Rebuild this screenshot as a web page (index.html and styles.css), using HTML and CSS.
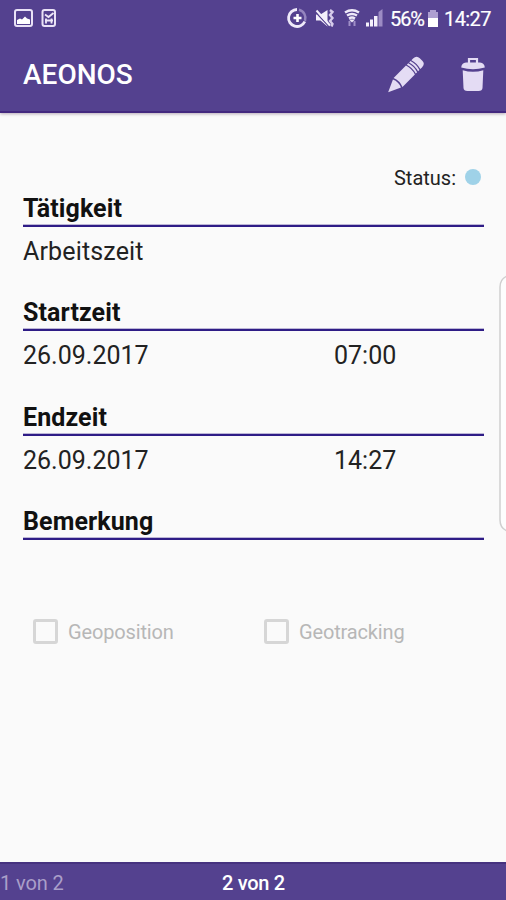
FILE: index.html
```html
<!DOCTYPE html>
<html lang="de">
<head>
<meta charset="utf-8">
<title>AEONOS</title>
<link rel="stylesheet" href="styles.css">
</head>
<body>
<div class="screen">
  <header class="top">
    <div class="statusbar">
      <svg class="notices" width="60" height="36" viewBox="0 0 60 36">
        <rect x="15" y="10" width="17" height="16" rx="2" fill="none" stroke="#e9e2f6" stroke-width="2"/>
        <path d="M17 20l3-1.500 2 1 3-3 2 2 3 1v4.500H17z" fill="#fff"/>
        <rect x="42.500" y="10" width="12.500" height="16" rx="2" fill="none" stroke="#e9e2f6" stroke-width="2"/>
        <path d="M45 14.500l3.500 2.500 5-4M46 18.500v5M51.500 18.500v5M45 20.500h8" fill="none" stroke="#eee8f8" stroke-width="1.800"/>
      </svg>
      <svg class="signals" width="104" height="36" viewBox="284 0 104 36">
        <path d="M297 9.500a8.500 8.500 0 1 0 7.800 12" fill="none" stroke="#efeafa" stroke-width="2.800"/>
        <path d="M299 9.800a8.500 8.500 0 0 1 6 11" fill="none" stroke="#9585bf" stroke-width="2.500"/>
        <path d="M297.500 14v8M293.500 18h8" stroke="#fff" stroke-width="2.600"/>
        <path d="M316 14.500h4.500l7-4.500v16.500l-7-6H316z" fill="#f4f0fb"/>
        <path d="M315.500 12l13 14" stroke="#54418f" stroke-width="1.300"/>
        <path d="M316.500 10.500l13.500 15" stroke="#f4f0fb" stroke-width="2"/>
        <path d="M330 10l2.500 2-2.500 3 2.500 3-2.500 3 2.500 3-1 2.500" fill="none" stroke="#d5cbea" stroke-width="2.400"/>
        <path d="M345 12.500q7-4.500 14 0M347 15.500q5-3 10 0M349 18.500q3-2 6 0" fill="none" stroke="#eee9f8" stroke-width="2.400"/>
        <path d="M349 19.500h6l-3 3z" fill="#eee9f8"/>
        <path d="M349.500 21v5M354.500 21v5" stroke="#9f8fc7" stroke-width="2"/>
        <path d="M366 26.500v-4h3v4zM370 26.500v-7h3v7zM374 26.500v-10.500h3.500v10.500z" fill="#f4f0fb"/>
        <path d="M378.500 26.500V12l4-3v17.500z" fill="#9c8bc4"/>
      </svg>
      <span class="percent">56%</span>
      <svg class="battery" width="12" height="20" viewBox="0 0 12 20">
        <path d="M1 9V3h2V1h6v2h2v6z" fill="#ae9fd1"/>
        <path d="M1 9h10v9H1z" fill="#fff"/>
      </svg>
      <span class="clock">14:27</span>
    </div>
    <div class="appbar">
      <h1 class="title">AEONOS</h1>
      <svg class="pencil" width="38" height="38" viewBox="0 0 38 38">
        <g transform="translate(1.500 36) rotate(-45)" fill="#e4dcf4">
          <path d="M-.5 0L12-5.700Q14.500 0 12 5.700z"/>
          <path d="M13.500-6.300H31Q33 0 31 6.300H13.500Q16 0 13.500-6.300z"/>
          <path d="M32.300-6.300h1.900q2 6.300 0 12.600h-1.900q2-6.300 0-12.600zM35.500-6.300h1.900q2 6.300 0 12.600h-1.900q2-6.300 0-12.600z"/>
          <path d="M38.700-6.300h2.300q5 0 5 4.500v3.600q0 4.500-5 4.500h-2.300q2-6.300 0-12.600z"/>
        </g>
      </svg>
      <svg class="trash" width="24" height="35" viewBox="0 0 24 35">
        <path d="M8 6V2h8v4" fill="none" stroke="#e4dcf4" stroke-width="2.200"/>
        <path d="M5 5.500h14q4.500.5 4.800 5Q12 14 .2 10.500 .5 6 5 5.500z" fill="#e4dcf4"/>
        <path d="M1.700 13.300Q12 16.300 22.300 13.300L21.500 31q-.2 3-4 3h-11Q2.700 34 2.500 31z" fill="#e4dcf4"/>
      </svg>
    </div>
  </header>
  <main class="content">
    <div class="state"><span>Status:</span><i class="dot"></i></div>
    <section class="field">
      <h2 class="label">Tätigkeit</h2>
      <div class="values"><span class="activity">Arbeitszeit</span></div>
    </section>
    <section class="field">
      <h2 class="label">Startzeit</h2>
      <div class="values"><span class="date">26.09.2017</span><span>07:00</span></div>
    </section>
    <section class="field">
      <h2 class="label">Endzeit</h2>
      <div class="values"><span class="date">26.09.2017</span><span>14:27</span></div>
    </section>
    <section class="field">
      <h2 class="label">Bemerkung</h2>
    </section>
    <div class="options">
      <div class="option"><i class="box"></i><span>Geoposition</span></div>
      <div class="option"><i class="box"></i><span>Geotracking</span></div>
    </div>
    <svg class="edge" width="7" height="258" viewBox="0 0 7 258"><path d="M8 1Q1 4 1 12v233q0 8 7 11" fill="#fdfdfd" stroke="#cfcfcf" stroke-width="1.500"/></svg>
  </main>
  <footer class="pager">
    <span class="previous">1 von 2</span>
    <span class="current">2 von 2</span>
    <span></span>
  </footer>
</div>
</body>
</html>
```
FILE: styles.css
```css
* { box-sizing: border-box; }
body { margin: 0; font-family: Roboto, "Liberation Sans", sans-serif; background: #fafafa; }
h1, h2 { margin: 0; }
svg { display: block; flex: none; }
.screen { width: 506px; height: 900px; display: flex; flex-direction: column; overflow: hidden; }
.top { height: 113px; flex: none; background: #54418f; border-bottom: 2px solid #43287f; box-shadow: 0 1px 3px rgba(80, 50, 80, .4); color: #fff; }
.statusbar { height: 36px; display: flex; align-items: center; font-size: 20px; }
.signals { margin-left: 224px; }
.percent { width: 39px; margin-left: 2px; letter-spacing: -1.1px; padding-top: 2px; -webkit-text-stroke: .2px #fff; }
.battery { margin: 1px 0 0 -2px; }
.clock { margin-left: 5px; letter-spacing: -.6px; padding-top: 2px; -webkit-text-stroke: .2px #fff; }
.appbar { height: 75px; display: flex; align-items: center; padding: 2px 21px 0 23px; }
.title { flex: 1; font-size: 28px; font-weight: 500; line-height: 32px; }
.pencil { margin-right: 36px; }
.content { flex: 1; position: relative; padding: 54px 22px 0 23px; color: #222; }
.state { height: 22px; display: flex; align-items: center; justify-content: flex-end; gap: 9px; padding-right: 3px; font-size: 20px; }
.dot { width: 16px; height: 16px; border-radius: 50%; background: #9fd2e8; margin-top: -2px; }
.field { height: 104.4px; padding-top: 4px; }
.label { height: 34px; line-height: 32px; font-size: 25px; font-weight: 700; letter-spacing: .1px; color: #111; border-bottom: 2px solid #2e1c86; box-shadow: inset 0 -1px rgba(46, 28, 134, .3); }
.values { display: flex; font-size: 25px; line-height: 30px; padding-top: 10px; }
.activity { letter-spacing: .15px; }
.date { width: 311px; }
.options { display: grid; grid-template-columns: 231px 1fr; padding: 11.500px 0 0 10px; }
.option { display: flex; align-items: center; gap: 10px; font-size: 20px; letter-spacing: -.15px; color: #b7b7b7; }
.option span { padding-top: 2px; }
.box { width: 25px; height: 25px; border: 3px solid #d6d6d6; border-radius: 3px; }
.edge { position: absolute; right: 0; top: 162px; }
.pager { height: 38px; flex: none; display: grid; grid-template-columns: 1fr 1fr 1fr; align-items: center; padding-top: 1px; background: #54418f; border-top: 2px solid #46327f; color: #fff; font-size: 20px; letter-spacing: -.1px; }
.previous { color: #aa9fc9; }
.current { text-align: center; font-weight: 500; letter-spacing: -.3px; padding-left: 1px; }
```
